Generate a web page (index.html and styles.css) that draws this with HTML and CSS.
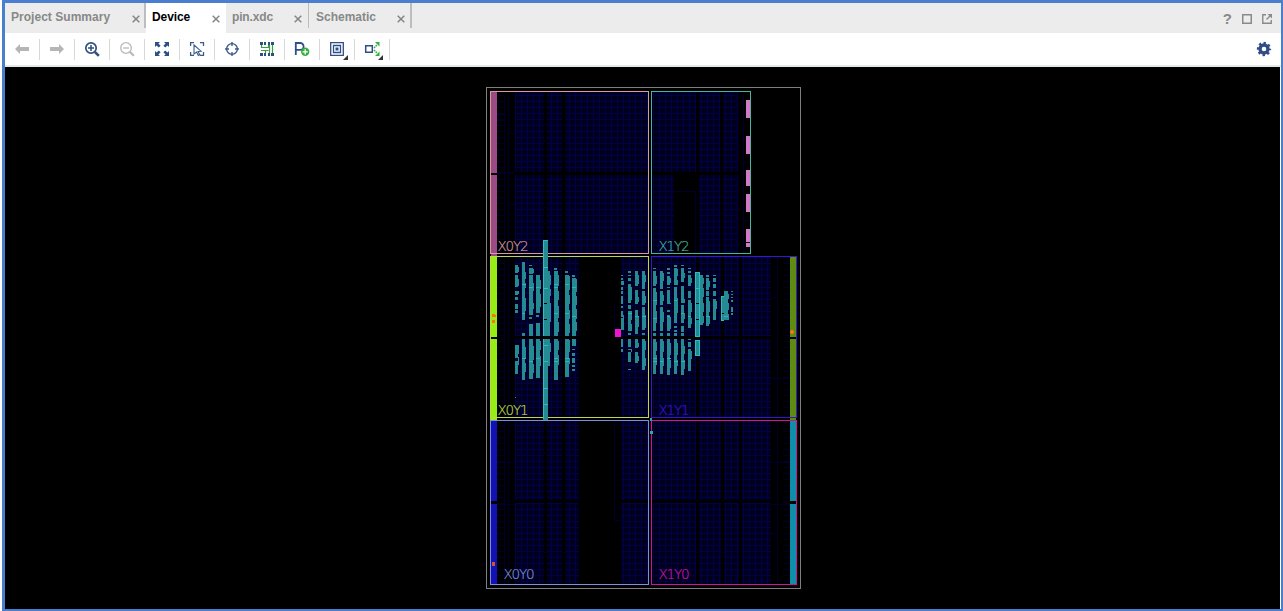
FILE: index.html
```html
<!DOCTYPE html>
<html lang="en">
<head>
<meta charset="utf-8">
<title>Device</title>
<link rel="stylesheet" href="styles.css">
</head>
<body>
<div class="window">
  <header class="tabs">
    <div class="tab tab-summary"><span class="tab-name">Project Summary</span><svg class="close" viewBox="0 0 8 8"><path d="M.7.7l6.6 6.6M7.3.7L.7 7.3"/></svg></div>
    <div class="tab tab-device active"><span class="tab-name">Device</span><svg class="close" viewBox="0 0 8 8"><path d="M.7.7l6.6 6.6M7.3.7L.7 7.3"/></svg></div>
    <div class="tab tab-pin"><span class="tab-name">pin.xdc</span><svg class="close" viewBox="0 0 8 8"><path d="M.7.7l6.6 6.6M7.3.7L.7 7.3"/></svg></div>
    <div class="tab tab-schematic"><span class="tab-name">Schematic</span><svg class="close" viewBox="0 0 8 8"><path d="M.7.7l6.6 6.6M7.3.7L.7 7.3"/></svg></div>
    <div class="window-actions">
      <span class="help">?</span>
      <svg width="10" height="10" viewBox="0 0 10 10"><path d="M.75.75h8.5v8.5H.75z" fill="none" stroke="#8a8a8a" stroke-width="1.5"/></svg>
      <svg width="10" height="10" viewBox="0 0 10 10"><path d="M4 .75H.75v8.5h8.5V6M4.5 5.5L8.5 1.5" fill="none" stroke="#8a8a8a" stroke-width="1.4"/><path d="M5.5 0H10v4.5z" fill="#8a8a8a"/></svg>
    </div>
  </header>

  <nav class="toolbar">
    <span class="tool"><svg viewBox="0 0 20 20"><path d="M3 10l5-5v3h9v4H8v3z" fill="#b5b5b5"/></svg></span>
    <span class="tool"><svg viewBox="0 0 20 20"><path d="M17 10l-5-5v3H3v4h9v3z" fill="#b5b5b5"/></svg></span>
    <span class="tool"><svg viewBox="0 0 20 20"><g fill="none" stroke="#30507f"><circle cx="9" cy="9" r="5.2" stroke-width="1.7"/><path d="M6 9h6M9 6v6" stroke-width="1.5"/><path d="M12.8 12.8l4 4" stroke-width="2.6"/></g></svg></span>
    <span class="tool"><svg viewBox="0 0 20 20"><g fill="none" stroke="#b8b8b8"><circle cx="9" cy="9" r="5.3" stroke-width="1.3"/><path d="M6 9h6" stroke-width="1.3"/><path d="M12.8 12.8l4 4" stroke-width="2.2"/></g></svg></span>
    <span class="tool"><svg viewBox="0 0 20 20"><path d="M3 3h5L6.4 4.6l2.2 2.2-1.8 1.8-2.2-2.2L3 8zM17 3v5l-1.6-1.6-2.2 2.2-1.8-1.8 2.2-2.2L12 3zM3 17v-5l1.6 1.6 2.2-2.2 1.8 1.8-2.2 2.2L8 17zM17 17h-5l1.6-1.6-2.2-2.2 1.8-1.8 2.2 2.2L17 12z" fill="#2f4e86"/></svg></span>
    <span class="tool"><svg viewBox="0 0 20 20"><g fill="none" stroke="#3d5b89" stroke-width="1.3"><path d="M3.6 7V3.6H7M13 3.600h3.5V7M3.6 13v3.4H7M13 16.4h3.5V13"/><path d="M7 6l7 6.2-3 .2 1.8 3.3-1.5.8-1.7-3.4L7 15z" stroke-width="1.1"/></g></svg></span>
    <span class="tool"><svg viewBox="0 0 20 20"><g fill="none" stroke="#3d5b89" stroke-width="1.4"><circle cx="10" cy="10" r="5.4"/><path d="M10 3v4M10 13v4M3 10h4M13 10h4"/></g></svg></span>
    <span class="tool"><svg viewBox="0 0 20 20"><path d="M3 3h3v3H3zM7 3h2v3H7zM11 3h2v3h-2zM14 3h3v3h-3zM3 14h3v3H3zM7 14h2v3H7zM11 14h2v3h-2zM14 14h3v3h-3z" fill="#2f4e86"/><path d="M4.500 6v2.500h4M4 11.500h4.500V14M15.500 6v8M12.500 6v8M8.500 8.500h3V6M8.500 11.500h3" fill="none" stroke="#36a03a" stroke-width="1.2"/></svg></span>
    <span class="tool"><svg viewBox="0 0 20 20"><path d="M3.8 16V4h4.4a3.4 3.4 0 010 6.8H4" fill="none" stroke="#2f4e86" stroke-width="1.8"/><circle cx="13.2" cy="12.8" r="4.2" fill="#36ae43"/><path d="M10.6 12.8h5.2M13.2 10.2v5.2" stroke="#fff" stroke-width="1.3"/></svg></span>
    <span class="tool"><svg viewBox="0 0 20 20"><path d="M3.7 3.7h12.6v12.6H3.7zM6.5 6.5h7v7h-7z" fill="none" stroke="#2f4e86" stroke-width="1.3"/><path d="M8.5 8.5h3v3h-3z" fill="#2f4e86"/><path d="M21 16v5h-5z" fill="#333"/></svg></span>
    <span class="tool"><svg viewBox="0 0 20 20"><path d="M3.7 6.700h6.600v6.600H3.700z" fill="none" stroke="#2f4e86" stroke-width="1.5"/><path d="M12 9l3-3M12 11l3 3" fill="none" stroke="#36ae43" stroke-width="1.5" stroke-dasharray="1.7 .7"/><path d="M13 3h4.500v4.500zM17.500 12.500V17H13z" fill="#36ae43"/><path d="M21 16v5h-5z" fill="#333"/></svg></span>
    <span class="tool settings"><svg viewBox="0 0 20 20"><circle cx="10" cy="10" r="4" fill="none" stroke="#2f4e86" stroke-width="3.4"/><circle cx="10" cy="10" r="6" fill="none" stroke="#2f4e86" stroke-width="2.3" stroke-dasharray="2.35 2.362" stroke-dashoffset="1.175"/></svg></span>
  </nav>

  <main class="device">
    <svg class="floorplan" viewBox="5 67 1275 542" shape-rendering="crispEdges">
      <defs>
        <pattern id="tiles" x="515" y="92" width="6" height="6" patternUnits="userSpaceOnUse">
          <path d="M0 0h6v6H0z" fill="#00001a"/><path d="M0 0h1v6H0zM0 3h6v1H0z" fill="#00004c"/>
        </pattern>
        <pattern id="ticks" x="497" y="92" width="6" height="6" patternUnits="userSpaceOnUse"><path d="M0 3h6v1H0z" fill="#00002c"/></pattern>
      </defs>

      <!-- logic tiles -->
      <g fill="url(#tiles)">
        <path d="M515 92h29v80h-29zM547 92h15v80h-15zM565 92h83v80h-83zM515 175h29v78h-29zM547 175h15v78h-15zM565 175h83v78h-83z"/>
        <path d="M653 92h43v80h-43zM699 92h21v80h-21zM723 92h15v80h-15zM653 175h21v78h-21zM699 175h21v78h-21zM723 175h15v78h-15z"/>
        <path d="M515 257h29v79h-29zM547 257h15v79h-15zM565 257h14v79h-14zM621 257h27v79h-27zM515 339h29v78h-29zM547 339h15v78h-15zM565 339h14v78h-14zM621 339h27v78h-27z"/>
        <path d="M515 421h29v79h-29zM547 421h15v79h-15zM565 421h14v79h-14zM621 421h27v79h-27zM515 503h29v81h-29zM547 503h15v81h-15zM565 503h14v81h-14zM621 503h27v81h-27z"/>
        <path d="M653 257h43v79h-43zM699 257h22v79h-22zM724 257h15v79h-15zM742 257h29v79h-29zM653 339h43v78h-43zM699 339h22v78h-22zM724 339h15v78h-15zM742 339h29v78h-29z"/>
        <path d="M653 421h43v79h-43zM699 421h22v79h-22zM724 421h15v79h-15zM742 421h29v79h-29zM653 503h43v81h-43zM699 503h22v81h-22zM724 503h15v81h-15zM742 503h29v81h-29z"/>
      </g>
      <path fill="url(#ticks)" d="M497 92h7v161h-7zM497 257h7v160h-7zM497 421h7v163h-7zM783 257h7v160h-7zM783 421h7v163h-7z"/>
      <g fill="none" stroke="#00002e">
        <path d="M504.500 95V253M504.500 257V417M504.500 421V584M508.500 95V253M508.500 257V417M508.500 421V584M777.500 257V417M777.500 421V584M743.500 92V253M614.500 304V335M614.500 421V520h6M675 191.500h20V253"/>
        <path d="M497 114.500h7M497 120.500h7M508 133.500h7M508 204.500h7M497 172.500h18M544 124.500h3M544 140.500h3M544 156.500h3M562 124.500h3M562 140.500h3M562 156.500h3M544 191.500h3M544 207.500h3M544 223.500h3M544 452.500h3M544 468.500h3M544 484.500h3M497 462.500h18M497 504.500h18M544 552.500h3M562 552.500h3M771 462.500h19M771 504.500h19M771 533.500h6M771 297.500h6M771 378.500h19M696 468.500h3M721 552.500h3M696 552.500h3M743 162.500h7M743 220.500h7"/>
      </g>

      <!-- I/O banks -->
      <path d="M491 92h6v81h-6zM491 175h6v81h-6z" fill="#9b4a86"/>
      <path d="M490 256h7v81h-7zM490 339h7v81h-7z" fill="#93f012"/>
      <path d="M491 421h6v80h-6zM491 504h6v80h-6z" fill="#1111b4"/>
      <path d="M790 257h6v80h-6zM790 339h6v81h-6z" fill="#5e8b11"/>
      <path d="M790 421h6v80h-6zM790 504h6v80h-6z" fill="#108da8"/>
      <path d="M746 100h4v18h-4zM746 136h4v18h-4zM746 170h4v16h-4zM746 194h4v18h-4zM746 229h4v13h-4zM746 243h4v4h-4z" fill="#d279c9"/>

      <!-- clock regions -->
      <g fill="none">
        <path d="M486.500 87.500h314v501h-314z" stroke="#7f7f7f"/>
        <path d="M490.500 91.500h158v162h-158z" stroke="#d69c9c"/>
        <path d="M651.500 91.500h99v162h-99z" stroke="#44b59f"/>
        <path d="M490.500 256.500h158v161h-158z" stroke="#bfd64b"/>
        <path d="M651.500 256.500h145v161h-145z" stroke="#3c14cb"/>
        <path d="M490.500 420.500h158v164h-158z" stroke="#7c90d6"/>
        <path d="M651.500 420.500h145v164h-145z" stroke="#d0149a"/>
      </g>

      <!-- placed cells -->
      <g fill="none" stroke="#238b91" stroke-width="4">
        <path d="M531 268v6m0 1v40m0 9v12M531 339v40"/>
        <path d="M538 275v38m0 10v13M538 339v39"/>
        <path d="M556 271v65M556 339v41"/>
        <path d="M567 275v61M567 339v38"/>
        <path d="M574 278v58M574 339v7"/>
      </g>
      <g fill="none" stroke="#238b91" stroke-width="3">
        <path d="M516.500 265v8m0 2v12m0 4v4m0 2v3m0 4v5m0 1v3M516.500 345v13m0 3v13"/>
        <path d="M523.500 262v58M523.500 333v3M523.500 339v41"/>
        <path d="M530.500 265v1m0 51v2M537.500 315v2M555.500 268v2M566.500 271v2"/>
        <path d="M573.500 275v2M573.500 349v1m0 3v3m0 2v5m0 2v2m0 2v2"/>
        <path d="M629.500 271v2m0 2v1m0 2v3m0 3v19m0 2v4m0 2v20m0 2v2M629.500 339v8m0 2v1m0 2v10m0 7v1"/>
        <path d="M636.500 271v15m0 4v14m0 6v24M636.500 339v9m0 4v11"/>
        <path d="M643.500 271v18m0 2v14m0 2v23m0 3v2M643.500 339v31"/>
        <path d="M654.500 268v1m0 2v15m0 2v43m0 2v3M654.500 339v35"/>
        <path d="M661.500 271v18m0 2v14m0 2v24m0 2v3M661.500 339v35"/>
        <path d="M668.500 268v2m0 2v2m0 2v9m0 2v1m0 2v14m0 6v2m0 3v16m0 2v3M668.500 339v36"/>
        <path d="M675.500 265v2m0 1v17m0 2v36m0 3v2m0 2v2m0 1v3M675.500 339v35"/>
        <path d="M682.500 265v1m0 2v14m0 4v17m0 2v18m0 3v6m0 1v3M682.500 339v36"/>
        <path d="M689.500 268v1m0 2v2m0 2v11m0 5v7m0 2v28M689.500 339v1m0 2v5m0 2v22"/>
        <path d="M701.500 275v50M707.500 275v2m0 1v12m0 1v5m0 1v29M714.500 275v1m0 2v4m0 2v4m0 3v5m0 3v21"/>
      </g>
      <path d="M726 291v29" stroke="#238b91" stroke-width="4"/>
      <g fill="none" stroke="#238b91" stroke-width="2">
        <path d="M549 271v65M549 339v27"/>
        <path d="M622 275v1m0 2v2m0 1v4m0 2v3m0 1v3m0 2v8m0 2v2m0 3v6m0 1v12M622 339v8m0 2v3"/>
        <path d="M732 291v1m0 2v1m0 2v1m0 2v2m0 5v5m0 1v2"/>
      </g>
      <g fill="none" stroke="#238b91">
        <path d="M518.500 267v5m0 7v7m0 5v3m0 51v9m0 3v8M525.500 272v7m0 4v5m0 10v13m0 36v11m0 5v9M533.500 269v4m0 10v8m0 12v6m0 37v14m0 4v9M540.500 280v9m0 5v13m0 34v9m0 6v10M550.500 275v10m0 4v7m0 7v19m0 21v9M558.500 275v11m0 5v9m0 6v12m0 4v10m0 9v9m0 5v10M569.500 276v14m0 5v9m0 6v9m0 5v9m0 7v12m0 6v6M576.500 279v13m0 4v9m0 4v10m0 3v9"/>
        <path d="M623.500 281v4m0 30v15M631.500 287v13m0 11v9m0 4v7m0 18v3M638.500 275v9m0 13v5m0 15v10m0 16v4m0 9v5M645.500 275v7m0 14v7m0 12v13m0 13v9m0 8v8"/>
        <path d="M656.500 276v8m0 8v13m0 6v12m0 19v9m0 4v10M663.500 273v8m0 14v6m0 11v10m0 19v11m0 6v8M670.500 278v5m0 20v1m0 13v12m0 14v12m0 5v8M677.500 269v7m0 4v5m0 13v15m0 30v12m0 5v6M684.500 273v5m0 21v4m0 10v6m0 27v8m0 6v9M691.500 278v5m0 20v9m0 6v6m0 27v8M703.500 278v6m0 4v9m0 6v9m0 4v7M709.500 281v6m0 14v11m0 4v8M716.500 301v8M728.500 294v5m0 4v7m0 4v6"/>
      </g>
      <path fill="#238b91" d="M543 240h5v96h-5zM543 339h5v81h-5zM695 272h5v65h-5zM695 340h5v16h-5zM721 296h3v25h-3z"/>
      <path d="M543.500 240v96M543.500 339v80M543 240.500h5M543 267.500h5M543 288.500h5M543 345.500h5M543 361.500h5M543 388.500h5M543 404.500h5M695.500 272.500h4v64h-4zM695.500 340.500h4v15h-4zM695 288.500h5M721.500 296v25M721 296.500h3M721 320.500h3" fill="none" stroke="#2abec0"/>
      <path d="M544 303.500h3M544 319.500h3M544 336.500h3M696 303.500h3M696 319.500h3M722 313.500h2" stroke="#000"/>
      <path d="M522 284.500h4M529 287.500h4M536 287.500h4M554 284.500h4M554 287.500h4M565 284.500h4M572 287.500h4M522 313.500h3M554 313.500h4M565 313.500h4M572 316.500h4M522 358.500h4M529 361.500h4M536 358.500h4M554 358.500h4M554 361.500h4M565 358.500h4M565 361.500h4M628 313.500h4M635 316.500h4M642 316.500h4M653 300.500h4M674 300.500h3M681 313.500h3M653 318.500h4M667 316.500h3M688 316.500h3M653 358.500h4M653 361.500h4M660 361.500h3M667 358.500h4M674 361.500h4M681 361.500h4M706 316.500h4M724 316.500h4" stroke="#2fb3b5"/>
      <path d="M650 418h2v3h-2zM650 431h3v3h-3z" fill="#2ca8a8"/>
      <path d="M515 397h1v1h-1z" fill="#238b91"/>
      <path d="M615 329h6v8h-6z" fill="#f013d0"/>
      <path d="M492 314h3v3h-3zM494 315h2v2h-2zM492 320h3v3h-3zM790 331h4v2h-4zM791 330h2v4h-2z" fill="#ff7410"/>
      <path d="M492 562h3v4h-3z" fill="#cc5533"/>

      <g class="region-labels">
        <text class="region-x0y2" x="497.500" y="251" textLength="31">X0Y2</text>
        <text class="region-x1y2" x="658.500" y="251" textLength="31">X1Y2</text>
        <text class="region-x0y1" x="497.500" y="415" textLength="31">X0Y1</text>
        <text class="region-x1y1" x="658.500" y="415" textLength="31">X1Y1</text>
        <text class="region-x0y0" x="503.500" y="579" textLength="31">X0Y0</text>
        <text class="region-x1y0" x="658.500" y="579" textLength="31">X1Y0</text>
      </g>
    </svg>
  </main>
</div>
</body>
</html>
```

FILE: styles.css
```css
* { box-sizing: border-box; }
html, body { margin: 0; height: 100%; }
body { padding-left: 2px; background: #fff; font-family: "Liberation Sans", Arial, sans-serif; overflow: hidden; }

.window {
  display: flex;
  flex-direction: column;
  height: 611px;
  border: solid #4a7ecf;
  border-width: 3px 2px 2px 3px;
  background: #fff;
}

.tabs { display: flex; height: 30px; flex: none; background: #ececec; color: #888; }
.tab { position: relative; display: flex; align-items: flex-start; justify-content: space-between; padding: 6px 6px 0 6px; font-size: 12px; font-weight: bold; line-height: 16px; }
.tab::after { content: ""; position: absolute; right: 0; top: 0; width: 2px; height: 25px; background: #bdbdbd; }
.tab-summary { width: 141px; padding-right: 6px; }
.tab-summary .tab-name { letter-spacing: .03px; }
.tab-device { width: 80px; }
.tab-device .tab-name { letter-spacing: -.1px; }
.tab-device::after { display: none; }
.tab-pin { width: 83px; padding-right: 7px; }
.tab-pin .tab-name { letter-spacing: -.15px; }
.tab-pin::after { width: 1px; }
.tab-schematic { width: 103px; padding: 6px 7px 0 7px; }
.active { background: #fff; color: #000; }
.close { width: 8px; height: 8px; margin-top: 6px; fill: none; stroke: #858585; stroke-width: 1.5; }

.window-actions { display: flex; align-items: center; gap: 10px; margin-left: auto; padding: 2px 9px 0 0; }
.help { font-size: 15px; font-weight: bold; line-height: 16px; }

.toolbar { display: flex; align-items: center; flex: none; height: 34px; border-bottom: 2px solid #e4e8e8; }
.tool { display: flex; align-items: center; justify-content: center; width: 35px; height: 21px; border-right: 1px solid #d8d8d8; }
.tool svg { width: 20px; height: 20px; overflow: visible; }
.settings { width: 34px; margin-left: auto; border: 0; }

.device { flex: 1; min-height: 0; margin-right: 1px; background: #000; }
.floorplan { display: block; width: 1275px; height: 542px; }

.region-labels { font-family: "DejaVu Sans", sans-serif; font-weight: 200; font-size: 13.5px; stroke-width: .2px; }
.region-x0y2 { fill: #d69c9c; stroke: #d69c9c; }
.region-x1y2 { fill: #44b59f; stroke: #44b59f; }
.region-x0y1 { fill: #bfd64b; stroke: #bfd64b; }
.region-x1y1 { fill: #3c14cb; stroke: #3c14cb; }
.region-x0y0 { fill: #7c90d6; stroke: #7c90d6; }
.region-x1y0 { fill: #d0149a; stroke: #d0149a; }
```
